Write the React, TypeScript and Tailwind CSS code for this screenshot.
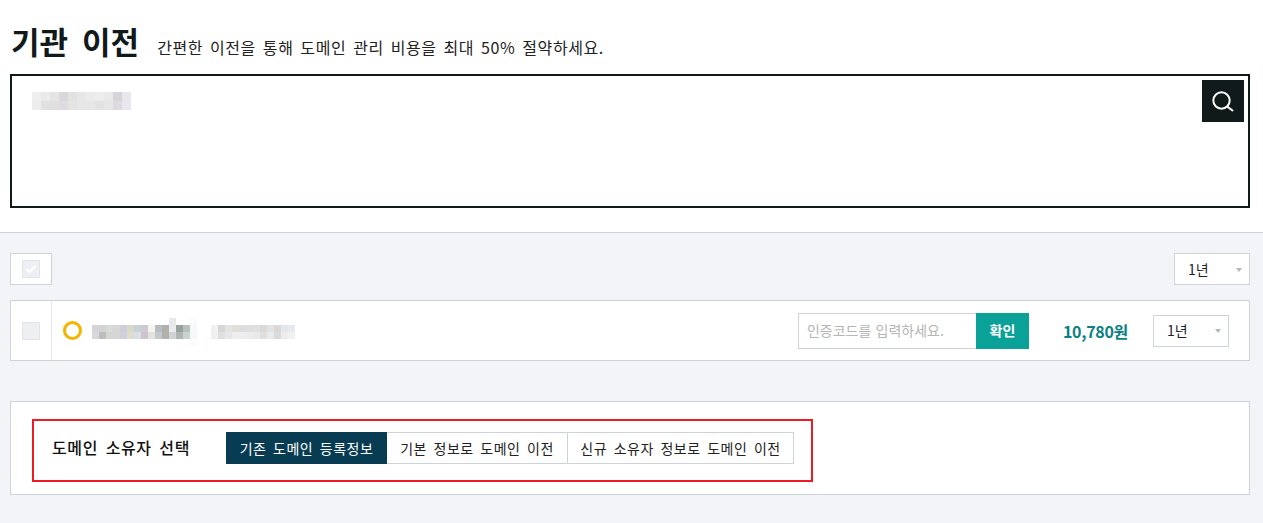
import React from "react";

const font = { fontFamily: '"Noto Sans CJK KR", "Noto Sans", sans-serif' };

function Mosaic({ rows, cell }: { rows: string[][]; cell: number }) {
  return (
    <div className="flex flex-col shrink-0">
      {rows.map((r, i) => (
        <div key={i} className="flex">
          {r.map((c, j) => (
            <div key={j} style={{ width: cell, height: cell, background: c }} />
          ))}
        </div>
      ))}
    </div>
  );
}

const topRows = [
  ["#eeeeee", "#eaeaea", "#e4e4e4", "#d9d7dc", "#e2e2e2", "#e5e8e4", "#ebebed", "#ececee", "#e9e9e9", "#d6d4d6", "#e9e7ec"],
  ["#ededed", "#e2e1e1", "#dfdfdf", "#dedbe2", "#e2e5e0", "#e6e6e8", "#e6e6e6", "#e3e2e0", "#e6e6e6", "#dedbe0", "#e9e8ee"],
];

const rowA = [
  ["#ffffff", "#ffffff", "#ffffff", "#ffffff", "#ffffff", "#ffffff", "#ffffff", "#ffffff", "#ffffff", "#ffffff", "#ffffff", "#e6e9e9", "#ffffff", "#ffffff", "#f9fbfb"],
  ["#d5d5d7", "#d3d3d5", "#d6dad8", "#d8d7d5", "#cfcdd8", "#d7d7cb", "#c8d0d8", "#cfc9d2", "#f3f3ef", "#b6bcc0", "#b2aeaa", "#e8eaec", "#96a09d", "#b9bfbd", "#f5f9fc"],
  ["#d8d8da", "#bdbdc0", "#d5d6d0", "#d6d6d4", "#d0cfdc", "#dddccd", "#d8dfe8", "#cdc5cc", "#e2e3de", "#c4c8cc", "#b5b0ac", "#ced4d6", "#b0b4b2", "#cad2d2", "#f5f8fa"],
  ["#ffffff", "#ffffff", "#ffffff", "#ffffff", "#ffffff", "#ffffff", "#ffffff", "#ffffff", "#ffffff", "#ffffff", "#ffffff", "#ffffff", "#ffffff", "#ffffff", "#fafbfb"],
];
const rowB = [
  ["#f0f0f0", "#d8d6d4", "#e4e4e4", "#e2dfda", "#dcdce2", "#dfdddd", "#e0dede", "#dcd8d6", "#dfe3e3", "#dcd8d6", "#e3e6ea", "#e6e9ee"],
  ["#efefef", "#dedede", "#e6e6e6", "#eeeeec", "#eeeef0", "#ececec", "#e9e9e9", "#e1dfdd", "#e8ebeb", "#d8dadc", "#ececec", "#f1f1f1"],
];

function Check({ on }: { on?: boolean }) {
  return (
    <div className="w-[18px] h-[18px] border border-[#e1e4e9] bg-[#edeff3] flex items-center justify-center">
      {on && (
        <svg width="12" height="10" viewBox="0 0 12 10" fill="none">
          <path d="M1.5 5 L4.5 8 L10.5 2" stroke="#ffffff" strokeWidth="2" />
        </svg>
      )}
    </div>
  );
}

function YearSelect({ className }: { className: string }) {
  return (
    <div className={`h-8 w-[76px] bg-white border border-[#ccd4da] flex items-center justify-between pl-[13px] pr-[7px] text-[14px] text-[#222] ${className}`}>
      <span>1년</span>
      <span className="w-0 h-0 border-x-[3.5px] border-x-transparent border-t-[4px] border-t-[#b4b8bc] mt-[1px]" />
    </div>
  );
}

export default function App() {
  return (
    <div className="w-[1263px] h-[523px] overflow-hidden bg-white text-[#111a1a] flex flex-col" style={font}>
      <div className="h-[232px] shrink-0 pl-[10px] pr-[13px] pt-[19px]">
        <div className="flex items-baseline h-[55px]">
          <h1 className="ml-[1px] text-[31px] leading-[44px] font-bold [word-spacing:7px]">기관 이전</h1>
          <p className="ml-[18px] text-[16px] tracking-[0.6px] [word-spacing:2.7px] text-[#222]">간편한 이전을 통해 도메인 관리 비용을 최대 50% 절약하세요.</p>
        </div>
        <div className="h-[134px] border-2 border-[#111a1a] flex justify-between items-start">
          <div className="ml-[20px] mt-[16px]">
            <Mosaic rows={topRows} cell={9} />
          </div>
          <div className="mt-1 mr-1 w-[42px] h-[42px] bg-[#101a1a] flex items-center justify-center">
            <svg width="24" height="24" viewBox="0 0 24 24" fill="none" stroke="#ffffff" strokeWidth="2" strokeLinecap="round">
              <circle cx="10.5" cy="11.5" r="8.2" />
              <path d="M16.5 17.8 L21.5 21.5" />
            </svg>
          </div>
        </div>
      </div>

      <div className="flex-1 bg-[#f2f4f8] border-t border-[#ccd4da] pl-[10px] pr-[13px] pt-5">
        <div className="flex justify-between">
          <div className="w-[42px] h-8 bg-white border border-[#ccd4da] flex items-center justify-center">
            <Check on />
          </div>
          <YearSelect className="" />
        </div>

        <div className="mt-[15px] h-[61px] bg-white border border-[#ccd4da] flex items-center">
          <div className="w-[41px] h-full border-r border-[#e3e6ea] flex items-center justify-center shrink-0">
            <Check />
          </div>
          <div className="ml-[11px] w-[19px] h-[19px] rounded-full border-[3.5px] border-[#f4b400] shrink-0" />
          <div className="ml-[10px] mt-[3px] flex items-start">
            <Mosaic rows={rowA} cell={7} />
            <div className="ml-[14px] mt-[7px]">
              <Mosaic rows={rowB} cell={7} />
            </div>
          </div>
          <div className="ml-auto flex items-center">
            <div className="w-[178px] h-9 border border-[#ccd4da] border-r-0 flex items-center pl-2 text-[14px] text-[#b5b5b5] [word-spacing:1px]">인증코드를 입력하세요.</div>
            <div className="w-[53px] h-9 bg-[#0aa198] text-white text-[14px] font-bold flex items-center justify-center">확인</div>
            <div className="ml-[34px] text-[16px] font-bold text-[#0b7f83] tracking-[-0.3px]">10,780원</div>
            <YearSelect className="ml-[25px] mr-5" />
          </div>
        </div>

        <div className="mt-10 h-[94px] bg-white border border-[#ccd4da] pt-[17px] pl-[21px]">
          <div className="w-[781px] h-[63px] border-2 border-[#ed1c24] flex items-center pl-[18px] pb-[5px]">
            <div className="w-[174px] mb-[3px] text-[16px] font-medium tracking-[0.6px] [word-spacing:3.5px] text-[#111]">도메인 소유자 선택</div>
            <div className="flex h-8 text-[14px] tracking-[0.5px] [word-spacing:3px] text-[#222]">
              <div className="w-[161px] bg-[#083c52] text-white flex items-center justify-center">기존 도메인 등록정보</div>
              <div className="w-[181px] border-y border-r border-[#ccd4da] flex items-center justify-center">기본 정보로 도메인 이전</div>
              <div className="w-[226px] border-y border-r border-[#ccd4da] flex items-center justify-center">신규 소유자 정보로 도메인 이전</div>
            </div>
          </div>
        </div>
      </div>
    </div>
  );
}
